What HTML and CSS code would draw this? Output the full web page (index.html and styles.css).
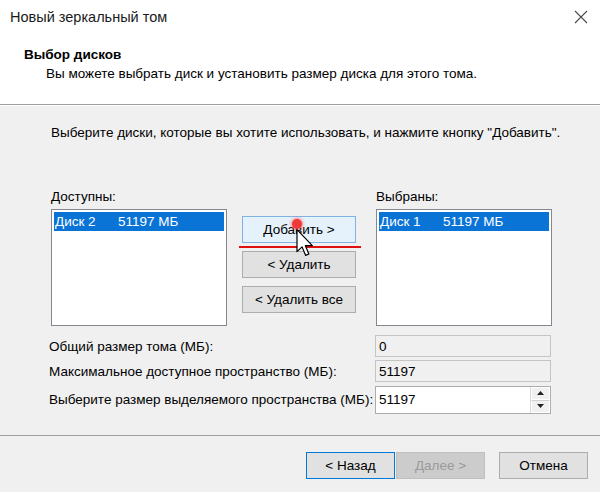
FILE: index.html
```html
<!DOCTYPE html>
<html lang="ru">
<head>
<meta charset="utf-8">
<title>Новый зеркальный том</title>
<link rel="stylesheet" href="styles.css">
</head>
<body>
<div class="window">
  <div class="titlebar">
    <span class="title">Новый зеркальный том</span>
    <svg class="close" width="14" height="14" viewBox="0 0 14 14"><path d="M1 1 L13 13 M13 1 L1 13" stroke="#4a4a4a" stroke-width="1.1" fill="none"/></svg>
  </div>
  <div class="header">
    <div class="h-title">Выбор дисков</div>
    <div class="h-sub">Вы можете выбрать диск и установить размер диска для этого тома.</div>
  </div>
  <div class="body">
    <p class="intro">Выберите диски, которые вы хотите использовать, и нажмите кнопку "Добавить".</p>
    <div class="picker">
      <div class="col">
        <div class="lbl">Доступны:</div>
        <div class="listbox">
          <div class="item sel"><span class="name">Диск 2</span>51197 МБ</div>
        </div>
      </div>
      <div class="mid">
        <button class="btn hover">Добавить &gt;</button>
        <button class="btn">&lt; Удалить</button>
        <button class="btn">&lt; Удалить все</button>
      </div>
      <div class="col right">
        <div class="lbl">Выбраны:</div>
        <div class="listbox">
          <div class="item sel"><span class="name">Диск 1</span>51197 МБ</div>
        </div>
      </div>
    </div>
    <div class="sizes">
      <div class="slbl">Общий размер тома (МБ):</div>
      <div class="field ro">0</div>
      <div class="slbl">Максимальное доступное пространство (МБ):</div>
      <div class="field ro">51197</div>
      <div class="slbl">Выберите размер выделяемого пространства (МБ):</div>
      <div class="field spin">
        <span class="val">51197</span>
        <span class="spinner">
          <span class="sbtn"><svg width="7" height="4" viewBox="0 0 7 4"><path d="M3.5 0 L7 4 L0 4 Z" fill="#222"/></svg></span>
          <span class="sbtn"><svg width="7" height="4" viewBox="0 0 7 4"><path d="M0 0 L7 0 L3.5 4 Z" fill="#222"/></svg></span>
        </span>
      </div>
    </div>
  </div>
  <div class="footer">
    <button class="btn fbtn focus">&lt; Назад</button>
    <button class="btn fbtn disabled">Далее &gt;</button>
    <button class="btn fbtn cancel">Отмена</button>
  </div>

  <div class="redline"></div>
  <div class="reddot"></div>
  <svg class="cursor" width="18" height="28" viewBox="0 0 13 21"><path d="M0.5 0.5 L0.5 17 L4.3 13.4 L7 19.8 L9.4 18.8 L6.8 12.5 L12 12.5 Z" fill="#fff" stroke="#000" stroke-width="0.9" stroke-linejoin="round"/></svg>
</div>
</body>
</html>
```

FILE: styles.css
```css
* { box-sizing: border-box; }
html, body { margin: 0; padding: 0; }
body {
  font-family: "Liberation Sans", Arial, sans-serif;
  font-size: 13.5px;
  color: #000;
  background: #f0f0f0;
}
.window {
  position: relative;
  width: 600px;
  height: 492px;
  display: flex;
  flex-direction: column;
  background: #f0f0f0;
  overflow: hidden;
}
.titlebar {
  height: 34px;
  background: #fff;
  display: flex;
  align-items: center;
  justify-content: space-between;
  padding: 0 12px 0 10px;
}
.title {
  font-family: "Liberation Sans", Arial, sans-serif;
  font-size: 14.5px;
  color: #1a1a1a;
}
.close { display: block; }
.header {
  height: 71px;
  background: #fff;
  padding: 13px 0 0 24px;
  border-bottom: 1px solid #a0a0a0;
  line-height: 16px;
}
.h-title { font-weight: bold; }
.h-sub { margin-top: 3px; padding-left: 22px; }
.body {
  height: 330px;
  border-top: 1px solid #fff;
  padding-top: 19px;
}
.intro {
  margin: 0 0 0 51px;
  line-height: 16px;
}
.picker {
  display: flex;
  margin: 48px 0 0 51px;
}
.col { width: 176px; }
.col.right { margin-left: 20px; }
.lbl { line-height: 16px; margin-bottom: 4px; }
.listbox {
  height: 117px;
  background: #fff;
  border: 1px solid #828790;
  padding: 2px;
}
.item {
  height: 19px;
  line-height: 19px;
  padding-left: 1px;
  white-space: nowrap;
}
.item.sel { background: #0a74d6; color: #fff; }
.name { display: inline-block; width: 63px; }
.mid {
  width: 114px;
  margin-left: 15px;
  padding-top: 27px;
  display: flex;
  flex-direction: column;
  gap: 8px;
}
.btn {
  font-family: "Liberation Sans", Arial, sans-serif;
  font-size: 13.5px;
  color: #000;
  height: 27px;
  background: #e1e1e1;
  border: 1px solid #adadad;
  padding: 0;
  margin: 0;
}
.btn.hover { background: #e5f1fb; border-color: #7fb2e5; }
.sizes {
  display: grid;
  grid-template-columns: 326px 176px;
  grid-template-rows: 22px 22px 28px;
  row-gap: 3px;
  margin: 9px 0 0 49px;
  align-items: center;
}
.field {
  height: 100%;
  padding-left: 3px;
  display: flex;
  align-items: center;
}
.field.ro { background: #f0f0f0; border: 1px solid #c4c4c4; }
.field.spin {
  background: #fff;
  border: 1px solid #acacac;
  padding-right: 0;
  justify-content: space-between;
  align-items: stretch;
  margin-top: 1px;
}
.val { display: flex; align-items: center; }
.spinner {
  width: 20px;
  display: flex;
  flex-direction: column;
  border-left: 1px solid #d6d6d6;
}
.sbtn {
  flex: 1;
  display: flex;
  align-items: center;
  justify-content: center;
  background: #f0f0f0;
  border: 1px solid #fff;
}
.sbtn + .sbtn { border-top: 1px solid #d0d0d0; }
.footer {
  flex: 1;
  border-top: 1px solid #a0a0a0;
  display: flex;
  justify-content: flex-end;
  align-items: flex-start;
  padding: 16px 12px 0 0;
}
.fbtn { width: 89px; }
.fbtn.focus { border-color: #0078d7; }
.fbtn.disabled { background: #cccccc; border-color: #bfbfbf; color: #9a9a9a; margin-left: 1px; }
.fbtn.cancel { margin-left: 14px; }
.redline {
  position: absolute;
  left: 239px;
  top: 246px;
  width: 122px;
  height: 2px;
  background: #e01010;
}
.reddot {
  position: absolute;
  left: 292px;
  top: 219px;
  width: 10px;
  height: 10px;
  border-radius: 50%;
  background: #f03a3a;
  box-shadow: 0 0 3px 1px rgba(255, 90, 90, 0.7);
}
.cursor {
  position: absolute;
  left: 296px;
  top: 229px;
}
```
